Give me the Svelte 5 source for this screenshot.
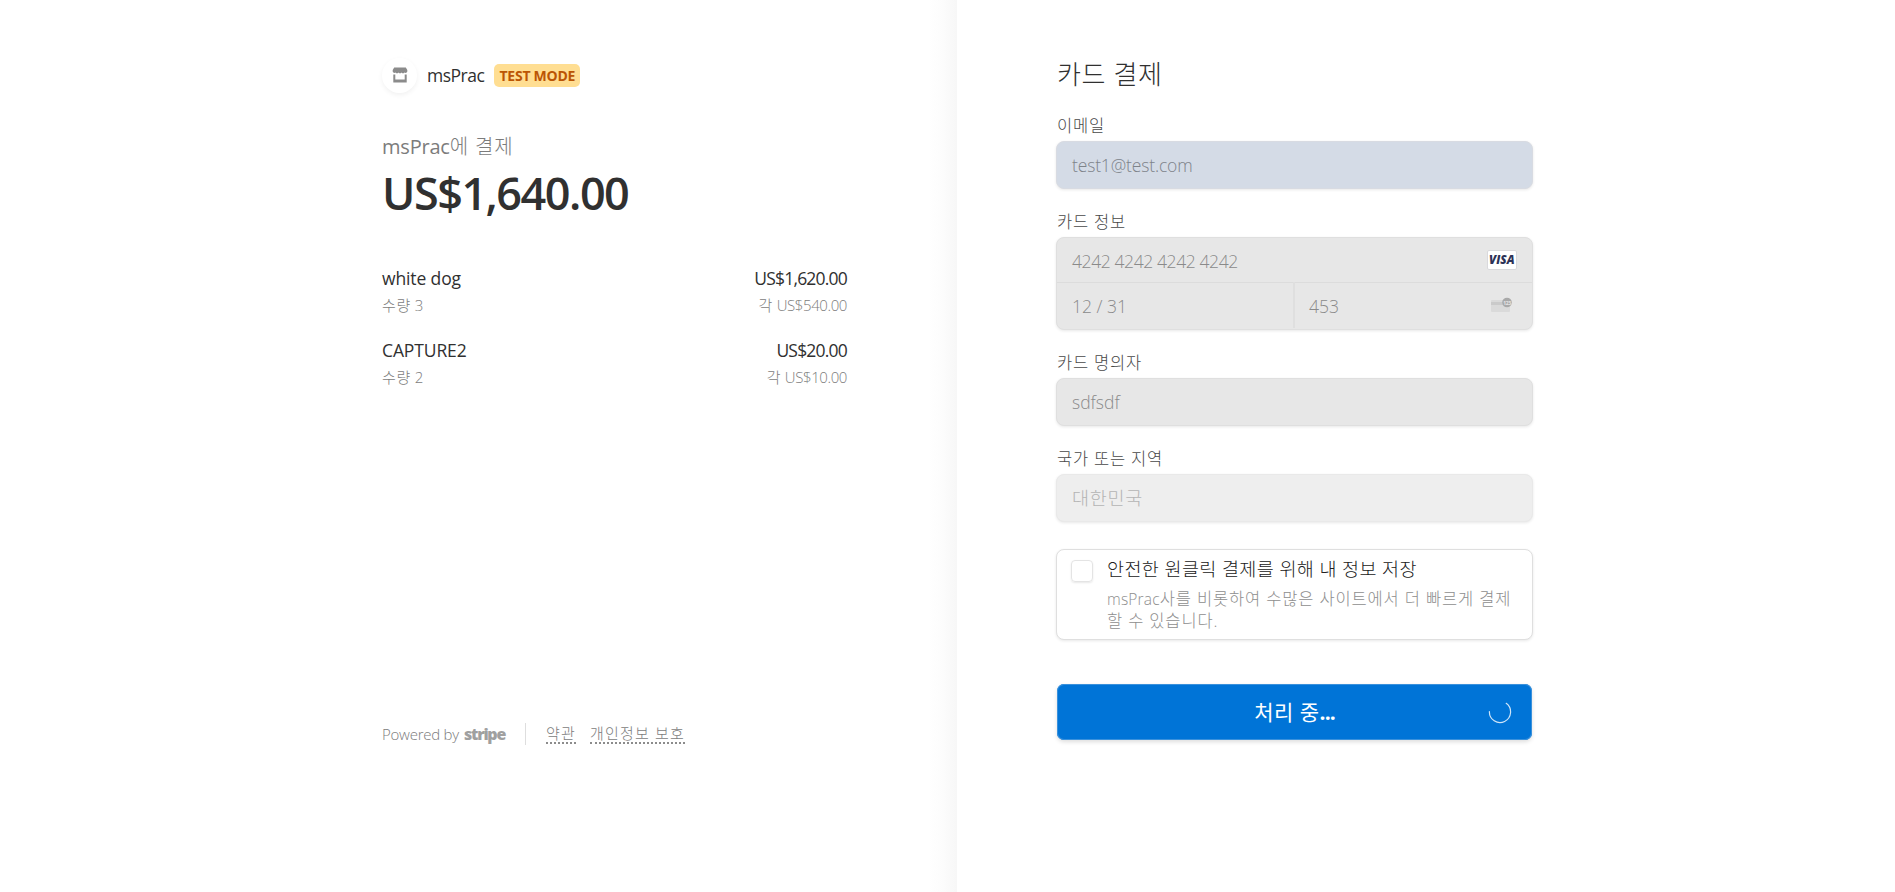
<script lang="ts">
	type Item = {
		name: string;
		quantity: number;
		total: string;
		each: string;
	};

	const merchant = 'msPrac';

	const items: Item[] = [
		{ name: 'white dog', quantity: 3, total: 'US$1,620.00', each: 'US$540.00' },
		{ name: 'CAPTURE2', quantity: 2, total: 'US$20.00', each: 'US$10.00' }
	];
</script>

<div class="checkout">
	<!-- 주문 요약 -->
	<section class="overview">
		<div class="summary">
			<header class="business">
				<span class="avatar">
					<svg width="16" height="16" viewBox="0 0 16 16" aria-hidden="true">
						<path
							fill="#8b8b8b"
							d="M2.200.500h11.600L15.300 3v1.500a1.700 1.700 0 0 1-2.800 1 2 2 0 0 1-3 0 2 2 0 0 1-3 0 2 2 0 0 1-3 0 1.700 1.700 0 0 1-2.800-1V3z"
						/>
						<path fill="#8b8b8b" d="M1.300 7.500h2v5h9.400v-5h2v8H1.300z" />
					</svg>
				</span>
				<span class="business-name">{merchant}</span>
				<span class="badge">TEST MODE</span>
			</header>

			<p class="pay-to"><span>{merchant}</span><span class="ko">에 결제</span></p>
			<p class="amount">US$1,640.00</p>

			<ul class="items">
				{#each items as item}
					<li>
						<div class="item-line">
							<span class="name">{item.name}</span>
							<span class="total">{item.total}</span>
						</div>
						<div class="item-detail">
							<span><span class="ko">수량</span> {item.quantity}</span>
							<span class="each"><span class="ko">각</span> {item.each}</span>
						</div>
					</li>
				{/each}
			</ul>
		</div>

		<footer>
			<span class="powered">Powered by</span>
			<span class="stripe">stripe</span>
			<i class="separator"></i>
			<a href="#terms">약관</a>
			<a href="#privacy">개인정보 보호</a>
		</footer>
	</section>

	<!-- 카드 결제 폼 -->
	<section class="payment">
		<form onsubmit={(e) => e.preventDefault()}>
			<h2>카드 결제</h2>

			<label for="email">이메일</label>
			<div class="field autofill" id="email"><span class="email">test1@test.com</span></div>

			<label for="card">카드 정보</label>
			<div class="card" id="card">
				<div class="card-row">
					<span class="number">4242 4242 4242 4242</span>
					<svg class="visa" width="30" height="20" viewBox="0 0 30 20" aria-label="Visa">
						<rect x=".5" y=".5" width="29" height="19" rx="1.5" fill="#fff" stroke="#d9d9dc" />
						<text x="2" y="14.2" textLength="25.5" lengthAdjust="spacingAndGlyphs">VISA</text>
					</svg>
				</div>
				<div class="card-row split">
					<div class="cell expiry"><span>12 / 31</span></div>
					<div class="cell cvc">
						<span>453</span>
						<svg width="22" height="16" viewBox="0 0 22 16" aria-hidden="true">
							<rect x="0" y="3" width="19" height="12" rx="1" fill="#dadada" />
							<rect x="0" y="5" width="19" height="3" fill="#cacaca" />
							<circle cx="16" cy="5.5" r="4.8" fill="#a9a9a9" />
							<text class="digits" x="12.2" y="7.5">123</text>
						</svg>
					</div>
				</div>
			</div>

			<label for="holder">카드 명의자</label>
			<div class="field" id="holder"><span class="holder">sdfsdf</span></div>

			<label for="country">국가 또는 지역</label>
			<div class="field country" id="country"><span>대한민국</span></div>

			<div class="save">
				<span class="checkbox"></span>
				<div>
					<p class="save-title">안전한 원클릭 결제를 위해 내 정보 저장</p>
					<p class="save-text">
						<span class="latin">{merchant}</span>사를 비롯하여 수많은 사이트에서 더 빠르게 결제<br />할 수
						있습니다.
					</p>
				</div>
			</div>

			<button type="submit">
				<span class="button-text">처리 중<b>...</b></span>
				<svg class="spinner" width="24" height="24" viewBox="0 0 24 24" aria-hidden="true">
					<path
						d="M18.2 3.3A10.6 10.6 0 1 1 1.4 11.5"
						fill="none"
						stroke="#cfe5f8"
						stroke-width="1.2"
						stroke-linecap="round"
					/>
				</svg>
			</button>
		</form>
	</section>
</div>

<style>
	:global(body) {
		background: #fff;
	}

	.checkout {
		display: flex;
		height: 892px;
		overflow: hidden;
		font-family: 'Open Sans', 'Noto Sans CJK KR', sans-serif;
		color: #303030;
	}

	p,
	h2,
	ul {
		margin: 0;
		padding: 0;
		list-style: none;
	}

	span {
		white-space: nowrap;
	}

	/* Overview */
	.overview {
		box-sizing: border-box;
		width: 957px;
		padding: 57px 110px 146px 382px;
		display: flex;
		flex-direction: column;
		justify-content: space-between;
		background: linear-gradient(to left, #f7f7f7, #fcfcfc 14px, #fff 28px);
	}

	.business {
		display: flex;
		align-items: center;
		height: 36px;
	}

	.avatar {
		display: grid;
		place-items: center;
		width: 35px;
		height: 35px;
		border-radius: 50%;
		box-shadow: 0 2px 5px #0000000f;
	}

	.business-name {
		margin-left: 10px;
		font-size: 17.5px;
		font-weight: 500;
		letter-spacing: -0.5px;
	}

	.badge {
		box-sizing: border-box;
		width: 86px;
		height: 23px;
		margin-left: 10px;
		border-radius: 5px;
		background: #ffde92;
		color: #bb5504;
		font-size: 14px;
		font-weight: 700;
		line-height: 23px;
		text-align: center;
		letter-spacing: -0.25px;
	}

	.pay-to {
		margin-top: 38px;
		font-size: 20px;
		font-weight: 500;
		line-height: 32px;
		letter-spacing: -0.2px;
		color: #7c7c7c;
	}

	.pay-to .ko {
		font-weight: 300;
		letter-spacing: 0.8px;
	}

	.amount {
		margin-top: 3px;
		font-size: 45px;
		font-weight: 600;
		line-height: 54px;
		letter-spacing: -1.5px;
	}

	.items {
		margin-top: 47px;
	}

	.items li {
		height: 72px;
	}

	.item-line,
	.item-detail {
		display: flex;
		justify-content: space-between;
	}

	.item-line {
		font-size: 17.5px;
		font-weight: 500;
		line-height: 22px;
		letter-spacing: -0.12px;
	}

	.total {
		letter-spacing: -0.8px;
	}

	.item-detail {
		margin-top: 6px;
		font-size: 15px;
		font-weight: 300;
		line-height: 21px;
		letter-spacing: -0.4px;
		color: #7c7c7c;
	}

	.item-detail .ko {
		letter-spacing: 0.8px;
	}

	footer {
		display: flex;
		align-items: center;
		height: 24px;
		font-size: 15px;
		font-weight: 300;
		color: #7c7c7c;
	}

	.powered {
		width: 78px;
		letter-spacing: -0.25px;
	}

	.stripe {
		width: 45px;
		margin-left: 4px;
		font-size: 16px;
		font-weight: 800;
		letter-spacing: -1.25px;
		color: #a0a0a0;
	}

	.separator {
		width: 1px;
		height: 22px;
		margin: 0 20px 0 16px;
		background: #dedede;
	}

	footer a {
		margin-right: 14px;
		border-bottom: 2px dotted #8c8c8c;
		color: #7c7c7c;
		line-height: 17px;
		letter-spacing: 1.2px;
		text-decoration: none;
		white-space: nowrap;
	}

	/* Payment form */
	.payment {
		padding: 56px 0 0 99px;
	}

	form {
		width: 477px;
	}

	h2 {
		height: 37px;
		margin-left: 1px;
		font-size: 26px;
		font-weight: 300;
		line-height: 36px;
		letter-spacing: 0.6px;
	}

	label {
		display: block;
		margin: 24px 0 6px 1px;
		font-size: 16.5px;
		font-weight: 300;
		line-height: 18px;
		letter-spacing: 0.8px;
		color: #484848;
	}

	.field,
	.card,
	.save {
		box-sizing: border-box;
		border: 1px solid #dfdfdf;
		border-radius: 8px;
		background: #e7e7e7;
		box-shadow: 0 1px 3px #00000018;
		font-size: 17.5px;
		font-weight: 300;
		color: #8a8a8a;
	}

	.field {
		height: 48px;
		padding: 0 15px;
		line-height: 46px;
	}

	.autofill {
		border-color: #d8dbe2;
		background: #d4dbe6;
		color: #7e838a;
		letter-spacing: -0.15px;
	}

	.country {
		background: #eee;
		border-color: #e9e9e9;
		color: #b4b4b4;
		font-size: 18.5px;
		line-height: 45px;
		letter-spacing: 0.7px;
	}

	.number {
		padding-top: 2px;
		letter-spacing: -0.4px;
	}

	.card {
		height: 93px;
	}

	.card-row {
		display: flex;
		align-items: center;
		justify-content: space-between;
		height: 44px;
		padding: 0 15px;
	}

	.split {
		border-top: 1px solid #dcdcdc;
		padding: 0;
	}

	.cell {
		box-sizing: border-box;
		display: flex;
		align-items: center;
		height: 46px;
		padding-left: 15px;
	}

	.cell span {
		padding-top: 2px;
	}

	.cvc {
		width: 239px;
		padding-left: 14px;
		padding-right: 19px;
		border-left: 2px solid #dfdfdf;
		justify-content: space-between;
	}

	.visa text {
		font-size: 11.5px;
		font-weight: 800;
		font-style: italic;
		fill: #2c3256;
	}

	.digits {
		font-size: 5px;
		font-weight: 700;
		letter-spacing: -0.3px;
		fill: #e6e6e6;
	}

	.save {
		display: flex;
		height: 91px;
		margin-top: 27px;
		padding: 10px 14px;
		background: #fff;
	}

	.checkbox {
		box-sizing: border-box;
		flex: none;
		width: 22px;
		height: 22px;
		margin-right: 14px;
		border: 1px solid #e4e4e4;
		border-radius: 4px;
		box-shadow: 0 1px 2px #00000018;
	}

	.save-title {
		font-size: 18.5px;
		line-height: 18px;
		color: #202020;
		letter-spacing: 0.4px;
		white-space: nowrap;
	}

	.save-text {
		margin-top: 10px;
		font-size: 16.5px;
		line-height: 21px;
		letter-spacing: 0.85px;
		color: #8e8e8e;
		white-space: nowrap;
	}

	.latin {
		font-size: 15.5px;
		letter-spacing: 0.2px;
	}

	button {
		display: grid;
		grid-template-columns: 1fr auto 1fr;
		align-items: center;
		width: 475px;
		height: 56px;
		margin: 44px 0 0 1px;
		padding: 0 20px;
		border: 0;
		border-radius: 7px;
		background: #0074d7;
		box-shadow:
			inset 0 0 0 1px #3a91dc,
			0 2px 4px #00000022;
		color: #fff;
		font: 400 21px 'Open Sans', 'Noto Sans CJK KR', sans-serif;
	}

	.button-text {
		grid-column: 2;
		padding-bottom: 2px;
		letter-spacing: 0.5px;
	}

	.button-text b {
		font-weight: 700;
		letter-spacing: -0.9px;
	}

	.spinner {
		justify-self: end;
	}
</style>
